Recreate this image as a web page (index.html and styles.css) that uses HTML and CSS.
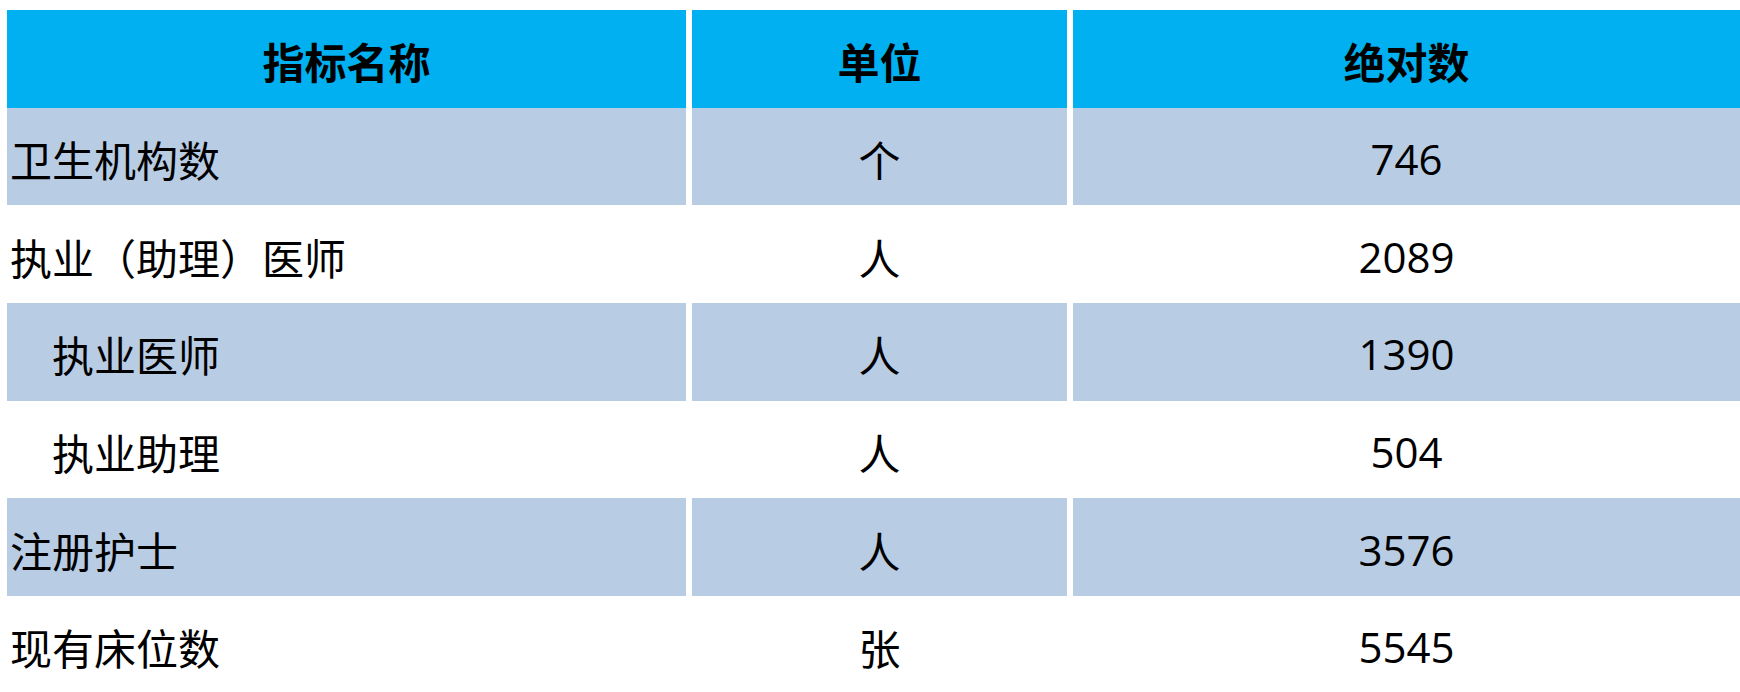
FILE: index.html
```html
<!DOCTYPE html>
<html lang="zh-CN">
<head>
<meta charset="utf-8">
<title>卫生资源</title>
<link rel="stylesheet" href="styles.css">
</head>
<body>
<div class="sheet">
  <div class="row head">
    <div class="cell">指标名称</div>
    <div class="cell">单位</div>
    <div class="cell">绝对数</div>
  </div>
  <div class="row shade">
    <div class="cell name">卫生机构数</div>
    <div class="cell">个</div>
    <div class="cell">746</div>
  </div>
  <div class="row">
    <div class="cell name">执业（助理）医师</div>
    <div class="cell">人</div>
    <div class="cell">2089</div>
  </div>
  <div class="row shade">
    <div class="cell name sub">执业医师</div>
    <div class="cell">人</div>
    <div class="cell">1390</div>
  </div>
  <div class="row">
    <div class="cell name sub">执业助理</div>
    <div class="cell">人</div>
    <div class="cell">504</div>
  </div>
  <div class="row shade">
    <div class="cell name">注册护士</div>
    <div class="cell">人</div>
    <div class="cell">3576</div>
  </div>
  <div class="row">
    <div class="cell name">现有床位数</div>
    <div class="cell">张</div>
    <div class="cell">5545</div>
  </div>
</div>
</body>
</html>
```

FILE: styles.css
```css
html, body {
  margin: 0;
  padding: 0;
  background: #ffffff;
  overflow: hidden;
}

.sheet {
  padding: 10px 0 0 7px;
  font-family: "Open Sans", "Noto Sans CJK SC", sans-serif;
  font-size: 42px;
  color: #000000;
}

.row {
  display: grid;
  grid-template-columns: 679px 375px 667px;
  column-gap: 6px;
  height: 97.7px;
}

.cell {
  display: flex;
  align-items: center;
  justify-content: center;
  padding-top: 4px;
  box-sizing: border-box;
  white-space: nowrap;
}

.head .cell {
  background: #00b0f0;
  font-weight: bold;
}

.shade .cell {
  background: #b8cce4;
}

.cell.name {
  justify-content: flex-start;
  padding-left: 3px;
}

.cell.sub {
  padding-left: 45px;
}
```
